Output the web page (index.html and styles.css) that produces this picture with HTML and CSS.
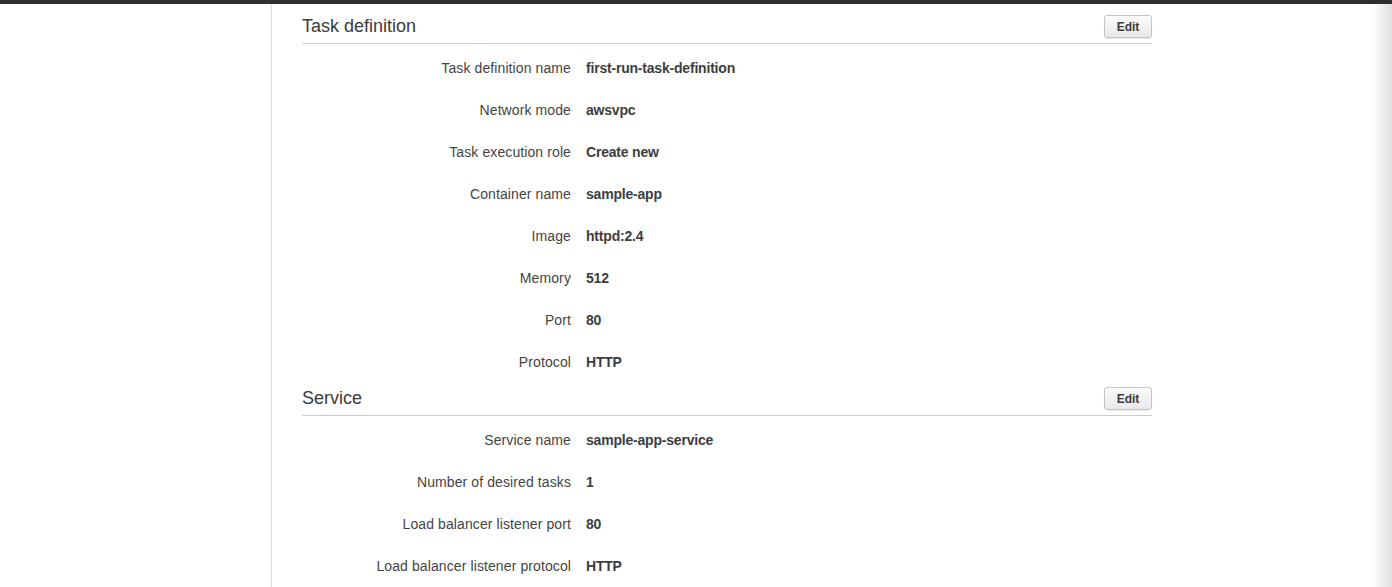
FILE: index.html
```html
<!DOCTYPE html>
<html>
<head>
<meta charset="utf-8">
<link rel="stylesheet" href="styles.css">
</head>
<body>
<div class="topbar"></div>
<div class="layout">
  <div class="sidebar"></div>
  <main class="content">
    <section class="section first">
      <div class="section-header">
        <h2 class="section-title">Task definition</h2>
        <button class="edit-btn">Edit</button>
      </div>
      <dl class="rows">
        <div class="row"><dt>Task definition name</dt><dd>first-run-task-definition</dd></div>
        <div class="row"><dt>Network mode</dt><dd>awsvpc</dd></div>
        <div class="row"><dt>Task execution role</dt><dd>Create new</dd></div>
        <div class="row"><dt>Container name</dt><dd>sample-app</dd></div>
        <div class="row"><dt>Image</dt><dd>httpd:2.4</dd></div>
        <div class="row"><dt>Memory</dt><dd>512</dd></div>
        <div class="row"><dt>Port</dt><dd>80</dd></div>
        <div class="row"><dt>Protocol</dt><dd>HTTP</dd></div>
      </dl>
    </section>
    <section class="section">
      <div class="section-header">
        <h2 class="section-title">Service</h2>
        <button class="edit-btn">Edit</button>
      </div>
      <dl class="rows">
        <div class="row"><dt>Service name</dt><dd>sample-app-service</dd></div>
        <div class="row"><dt>Number of desired tasks</dt><dd>1</dd></div>
        <div class="row"><dt>Load balancer listener port</dt><dd>80</dd></div>
        <div class="row"><dt>Load balancer listener protocol</dt><dd>HTTP</dd></div>
      </dl>
    </section>
  </main>
  <div class="filler"></div>
  <div class="edge-shadow"></div>
</div>
</body>
</html>
```
FILE: styles.css
```css
html, body {
  margin: 0;
  padding: 0;
  height: 100%;
  overflow: hidden;
  background: #fff;
  font-family: "Liberation Sans", Arial, Helvetica, sans-serif;
  color: #333;
}
.topbar {
  height: 4px;
  background: #2e2f32;
}
.layout {
  display: flex;
  height: calc(100% - 4px);
}
.sidebar {
  width: 271px;
  flex: none;
}
.content {
  width: 850px;
  flex: none;
  border-left: 1px solid #dddddd;
  padding-left: 30px;
}
.filler {
  flex: 1;
}
.edge-shadow {
  width: 20px;
  flex: none;
  background: linear-gradient(to right, rgba(0,0,0,0), rgba(0,0,0,0.13));
}
.section-header {
  height: 32px;
  border-bottom: 1px solid #cccccc;
  display: flex;
  justify-content: space-between;
  align-items: flex-start;
}
.section.first .section-header {
  margin-top: 7px;
}
.section-title {
  margin: 0;
  font-size: 18px;
  font-weight: normal;
  line-height: 30px;
  color: #3a3a3a;
}
.edit-btn {
  margin-top: 4px;
  width: 48px;
  height: 23px;
  padding: 0;
  border: 1px solid #c4c4c4;
  border-radius: 3px;
  background: linear-gradient(#fbfbfb, #e9e9e9);
  font-family: "Liberation Sans", Arial, sans-serif;
  font-size: 12px;
  font-weight: bold;
  color: #3a3a3a;
  box-shadow: 0 1px 1px rgba(0,0,0,0.08);
}
.rows {
  margin: 3px 0 0 0;
  padding: 0;
}
.row {
  display: grid;
  grid-template-columns: 269px 1fr;
  column-gap: 15px;
  height: 42px;
  align-items: center;
  font-size: 14px;
}
.row dt {
  text-align: right;
  color: #444;
  letter-spacing: 0.1px;
}
.row dd {
  margin: 0;
  font-weight: bold;
  color: #3d3d3d;
  letter-spacing: -0.2px;
}
```
